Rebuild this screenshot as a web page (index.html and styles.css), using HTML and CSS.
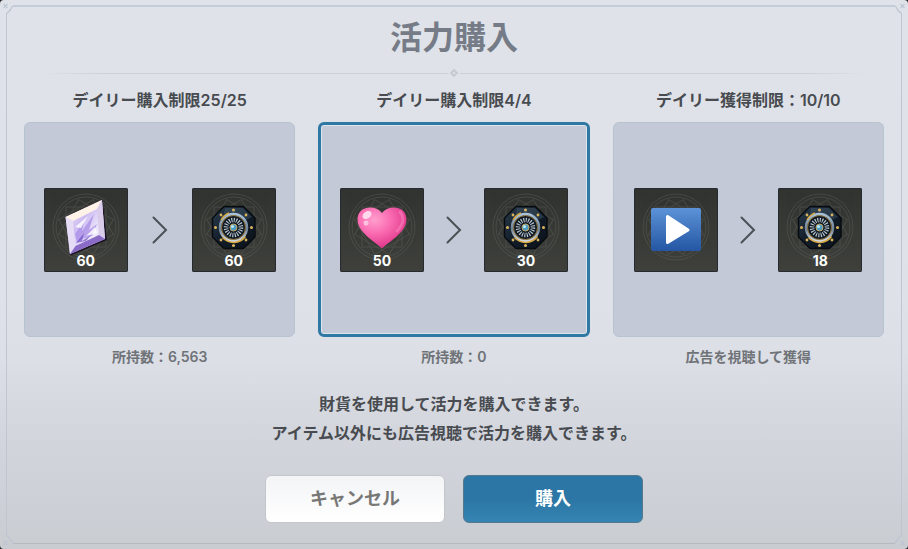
FILE: index.html
```html
<!DOCTYPE html>
<html lang="ja">
<head>
    <meta charset="UTF-8">
    <meta name="viewport" content="width=device-width, initial-scale=1.0">
    <title>活力購入</title>
    <link rel="stylesheet" href="styles.css">
</head>
<body>
<!-- 共通アイコン -->
<svg class="defs" width="0" height="0" aria-hidden="true">
    <defs>
        <linearGradient id="tileFill" x1="0" y1="0" x2="0" y2="1">
            <stop offset="0" stop-color="#30332f"/>
            <stop offset="1" stop-color="#3f403c"/>
        </linearGradient>
        <linearGradient id="crystalFill" x1="0" y1="0" x2="1" y2="1">
            <stop offset="0" stop-color="#fff4ee"/>
            <stop offset="0.4" stop-color="#cdbcf2"/>
            <stop offset="0.7" stop-color="#f0ecfc"/>
            <stop offset="1" stop-color="#a48ad6"/>
        </linearGradient>
        <radialGradient id="heartFill" cx="0.35" cy="0.3" r="0.75">
            <stop offset="0" stop-color="#ff9fce"/>
            <stop offset="0.45" stop-color="#fa6bb1"/>
            <stop offset="1" stop-color="#dc3086"/>
        </radialGradient>
        <linearGradient id="playFill" x1="0" y1="0" x2="0" y2="1">
            <stop offset="0" stop-color="#5c93d8"/>
            <stop offset="1" stop-color="#2456a2"/>
        </linearGradient>
        <linearGradient id="plateFill" x1="0" y1="0" x2="1" y2="1">
            <stop offset="0" stop-color="#2b3c4d"/>
            <stop offset="0.5" stop-color="#121d29"/>
            <stop offset="1" stop-color="#0b1119"/>
        </linearGradient>
        <linearGradient id="rimFill" x1="0" y1="0" x2="0" y2="1">
            <stop offset="0" stop-color="#a9c3da"/>
            <stop offset="0.55" stop-color="#6f8398"/>
            <stop offset="1" stop-color="#d3d8df"/>
        </linearGradient>

        <symbol id="tile" viewBox="0 0 84 84">
            <rect width="84" height="84" fill="url(#tileFill)"/>
            <g fill="none" stroke="#6b6e68" stroke-width="1" opacity="0.35">
                <circle cx="42" cy="39" r="33"/>
                <circle cx="42" cy="39" r="30"/>
                <rect x="22" y="19" width="40" height="40"/>
                <rect x="22" y="19" width="40" height="40" transform="rotate(30 42 39)"/>
                <rect x="22" y="19" width="40" height="40" transform="rotate(60 42 39)"/>
            </g>
            <rect x="0.5" y="0.5" width="83" height="83" fill="none" stroke="#262b32"/>
        </symbol>

        <symbol id="dial" viewBox="0 0 84 84">
            <path d="M32 18.500h19.500L63 30v19L51.500 60.500H32L20.500 49V30z" fill="url(#plateFill)" stroke="#080c11" stroke-width="1.500"/>
            <path d="M33 20h18l9 9-8 4-9-8-11 1z" fill="#4b6173" opacity="0.4"/>
            <g fill="#d9b35c">
                <circle cx="41.500" cy="22" r="1.500"/>
                <circle cx="54" cy="27" r="1.400"/>
                <circle cx="59.500" cy="39.500" r="1.500"/>
                <circle cx="54" cy="52" r="1.400"/>
                <circle cx="41.500" cy="57.500" r="1.500"/>
                <circle cx="29" cy="52" r="1.400"/>
                <circle cx="23.500" cy="39.500" r="1.500"/>
                <circle cx="29" cy="27" r="1.400"/>
            </g>
            <circle cx="41.500" cy="39.500" r="13.500" fill="#101a26" stroke="url(#rimFill)" stroke-width="2.500"/>
            <path d="M30.500 49.500a15 15 0 0 0 23 -1M29 32a15 15 0 0 1 8 -7" fill="none" stroke="#d6a944" stroke-width="1.500"/>
            <circle cx="41.500" cy="39.500" r="12" fill="none" stroke="#c99c40" stroke-width="0.700"/>
            <circle cx="41.500" cy="39.500" r="7.500" fill="none" stroke="#b9c6ce" stroke-width="4.500" stroke-dasharray="1.100 1.256"/>
            <circle cx="41.500" cy="39.500" r="3.500" fill="#4a9bc4" stroke="#c8a95e"/>
            <circle cx="40.500" cy="38.500" r="1.600" fill="#b5e5f5"/>
        </symbol>

        <symbol id="crystal" viewBox="0 0 84 84">
            <path d="M58.500 12L63 52 26.500 67.500 21 29z" fill="#1c1226"/>
            <path d="M58 12l3 39-35 15-4.500-37z" fill="url(#crystalFill)"/>
            <path d="M21.500 29L58 12l-5 9-24 12z" fill="#fff3e8"/>
            <path d="M21.500 29l7.500 4 2.500 25-5.500 8z" fill="#e7dcf6"/>
            <path d="M58 12l3 39-6-4-2-26z" fill="#d9ccea"/>
            <path d="M61 51L26 66l5.500-8 23.500-11z" fill="#8a6cc8"/>
            <path d="M31 46l9-13-2 10 12-17-5 16 8-6-5 12-10 3-5 4z" fill="#9c7ce3" opacity="0.6"/>
            <path d="M31 39l13-11-7 12zM42 48l9-9 2 6z" fill="#fff" opacity="0.8"/>
            <path d="M32 55l8-10-2 8 9-6-5 6z" fill="#6442bd" opacity="0.6"/>
        </symbol>

        <symbol id="heart" viewBox="0 0 84 84">
            <path d="M42 60.500C34 53 17.500 44 17.500 31.500 17.500 23 24 19.500 30 19.500c5.500 0 9.500 2 12 5.500 2.500-3.500 6.500-5.500 12-5.500 6 0 12.500 3.500 12.500 12C66.500 44 50 53 42 60.500z" fill="url(#heartFill)"/>
            <path d="M60 24c5 6 3 13-3 19" fill="none" stroke="#ff9bcb" stroke-width="3" stroke-linecap="round" opacity="0.4"/>
            <ellipse cx="27" cy="27" rx="5" ry="3.500" transform="rotate(-35 27 27)" fill="#ffd8ec"/>
            <circle cx="26" cy="35" r="2.500" fill="#ffc3e0"/>
        </symbol>

        <symbol id="play" viewBox="0 0 84 84">
            <rect x="17" y="20" width="50" height="43" rx="2" fill="url(#playFill)"/>
            <path d="M33.500 28.500v26L54 42z" fill="#fff" stroke="#fff" stroke-width="3" stroke-linejoin="round"/>
        </symbol>

        <symbol id="corner" viewBox="0 0 14 14">
            <path d="M5 4H13V6Q11.500 6.500 11 8.500T6.500 13H5z" fill="currentColor"/>
            <path d="M13.500 6Q11.500 6.500 11 8.500T6.500 13.500" fill="none" stroke="#bcc5d1" stroke-width="1.200"/>
            <path d="M3.500 4l4 4M7.500 4l-4 4" stroke="#bec6d4" stroke-width="1.200"/>
        </symbol>
    </defs>
</svg>

<main class="dialog">
    <svg class="corner top-left" aria-hidden="true"><use href="#corner"/></svg>
    <svg class="corner top-right" aria-hidden="true"><use href="#corner"/></svg>
    <svg class="corner bottom-left" aria-hidden="true"><use href="#corner"/></svg>
    <svg class="corner bottom-right" aria-hidden="true"><use href="#corner"/></svg>

    <div class="frame">
        <h1>活力購入</h1>
        <div class="divider"><span class="diamond"></span></div>

        <div class="options">
            <section class="option">
                <h2>デイリー購入制限25/25</h2>
                <button type="button" class="card wide" aria-pressed="false">
                    <span class="item">
                        <svg aria-hidden="true"><use href="#tile"/><use href="#crystal"/></svg>
                        <span class="count">60</span>
                    </span>
                    <svg class="arrow" viewBox="0 0 16 28" aria-hidden="true"><path d="M1.500 1.500L14 14 1.500 26.500"/></svg>
                    <span class="item">
                        <svg aria-hidden="true"><use href="#tile"/><use href="#dial"/></svg>
                        <span class="count">60</span>
                    </span>
                </button>
                <p class="note">所持数：6,563</p>
            </section>

            <section class="option">
                <h2>デイリー購入制限4/4</h2>
                <button type="button" class="card selected" aria-pressed="true">
                    <span class="item">
                        <svg aria-hidden="true"><use href="#tile"/><use href="#heart"/></svg>
                        <span class="count">50</span>
                    </span>
                    <svg class="arrow" viewBox="0 0 16 28" aria-hidden="true"><path d="M1.500 1.500L14 14 1.500 26.500"/></svg>
                    <span class="item">
                        <svg aria-hidden="true"><use href="#tile"/><use href="#dial"/></svg>
                        <span class="count">30</span>
                    </span>
                </button>
                <p class="note">所持数：0</p>
            </section>

            <section class="option">
                <h2>デイリー獲得制限：10/10</h2>
                <button type="button" class="card" aria-pressed="false">
                    <span class="item">
                        <svg aria-hidden="true"><use href="#tile"/><use href="#play"/></svg>
                    </span>
                    <svg class="arrow" viewBox="0 0 16 28" aria-hidden="true"><path d="M1.500 1.500L14 14 1.500 26.500"/></svg>
                    <span class="item">
                        <svg aria-hidden="true"><use href="#tile"/><use href="#dial"/></svg>
                        <span class="count">18</span>
                    </span>
                </button>
                <p class="note">広告を視聴して獲得</p>
            </section>
        </div>

        <p class="description">財貨を使用して活力を購入できます。<br>アイテム以外にも広告視聴で活力を購入できます。</p>

        <div class="actions">
            <button type="button" class="btn cancel">キャンセル</button>
            <button type="button" class="btn buy">購入</button>
        </div>
    </div>
</main>
</body>
</html>
```
FILE: styles.css
```css
* {
    box-sizing: border-box;
}
body {
    margin: 0;
    background-color: #25292b;
    font-family: Inter, "Noto Sans CJK JP", sans-serif;
    color: #484b50;
}
h1, h2, p {
    margin: 0;
}
button {
    font-family: inherit;
    cursor: pointer;
}
.defs {
    position: absolute;
}
.dialog {
    position: relative;
    display: flex;
    min-height: 100vh;
    padding: 5px 6px;
    border-radius: 4px;
    background: linear-gradient(#dfe3e9 0%, #dee2e8 55%, #dcdfe6 65%, #d2d5dc 80%, #c9ccd1 100%);
}
.frame {
    flex: 1;
    padding: 11px 17px 18px;
    border: 1px solid #bfc6d0;
    border-top: 2px solid #c3ccd8;
    border-bottom-color: #b5bac1;
}

/* 四隅の飾り */
.corner {
    position: absolute;
    width: 14px;
    height: 14px;
    color: #dfe3e9;
}
.top-left {
    top: 0;
    left: 0;
}
.top-right {
    top: 0;
    right: 0;
    transform: scaleX(-1);
}
.bottom-left {
    bottom: 0;
    left: 0;
    color: #cacdd2;
    transform: scaleY(-1);
}
.bottom-right {
    right: 0;
    bottom: 0;
    color: #cacdd2;
    transform: scale(-1);
}

h1 {
    font-size: 32px;
    line-height: 40px;
    font-weight: 700;
    text-align: center;
    color: #767c87;
}
.divider {
    display: flex;
    align-items: center;
    gap: 2px;
    margin: 11px 18px;
}
.divider::before, .divider::after {
    content: "";
    flex: 1;
    height: 1px;
    background: linear-gradient(to right, transparent, #cdd1d7 15%);
}
.divider::after {
    background: linear-gradient(to left, transparent, #cdd1d7 15%);
}
.diamond {
    width: 6px;
    height: 6px;
    margin: 1px;
    border: 2px solid #c6cacf;
    transform: rotate(45deg);
}

.options {
    display: grid;
    grid-template-columns: repeat(3, 1fr);
    gap: 23px;
}
.option {
    text-align: center;
}
.option h2 {
    font-size: 16px;
    line-height: 24px;
    font-weight: 600;
}
.card {
    display: flex;
    align-items: center;
    justify-content: center;
    gap: 22px;
    width: 100%;
    height: 215px;
    margin: 10px 0;
    padding: 0;
    border: 1px solid #b8c3d1;
    border-radius: 6px;
    background: #c3c9d6;
}
.card.wide {
    gap: 24px;
}
.card.selected {
    border: 3px solid #2f78a4;
    box-shadow: inset 0 0 0 1px #dce4ed;
}
.item {
    position: relative;
    width: 84px;
    height: 84px;
}
.item svg {
    display: block;
    width: 100%;
    height: 100%;
    border-radius: 2px;
}
.count {
    position: absolute;
    right: 0;
    bottom: 2px;
    left: 0;
    font-size: 14px;
    line-height: 18px;
    font-weight: 700;
    color: #fff;
}
.arrow {
    width: 16px;
    height: 28px;
    fill: none;
    stroke: #4c5057;
    stroke-width: 2;
    stroke-linecap: round;
}
.note {
    font-size: 14px;
    line-height: 20px;
    font-weight: 600;
    color: #6f7378;
}

.description {
    margin-top: 23px;
    font-size: 16px;
    line-height: 29px;
    font-weight: 600;
    text-align: center;
}
.actions {
    display: flex;
    justify-content: center;
    gap: 18px;
    margin-top: 27px;
}
.btn {
    width: 180px;
    height: 48px;
    padding: 0;
    border-radius: 6px;
    font-size: 18px;
    line-height: 24px;
}
.cancel {
    border: 1px solid #c3c7cb;
    background: linear-gradient(#f3f4f6, #fff);
    font-weight: 600;
    color: #777776;
}
.buy {
    border: 1px solid #55788f;
    background: linear-gradient(#2b76a5 50%, #3584b1);
    font-weight: 700;
    color: #fff;
}
```
